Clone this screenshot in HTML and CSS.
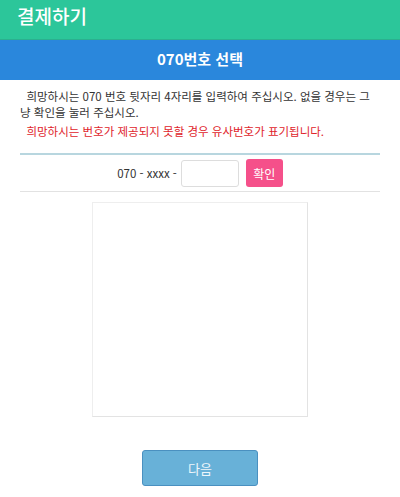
FILE: index.html
```html
<!DOCTYPE html>
<html lang="ko">
<head>
    <meta charset="UTF-8">
    <meta name="viewport" content="width=device-width, initial-scale=1.0">
    <title>결제하기</title>
    <link rel="stylesheet" href="styles.css">
</head>
<body>
    <div class="topbar">결제하기</div>
    <div class="subbar">070번호 선택</div>

    <div class="content">
        <p class="guide">&nbsp;&nbsp;희망하시는 070 번호 뒷자리 4자리를 입력하여 주십시오. 없을 경우는 그냥 확인을 눌러 주십시오.</p>
        <p class="notice">&nbsp;&nbsp;희망하시는 번호가 제공되지 못할 경우 유사번호가 표기됩니다.</p>

        <div class="number-row">
            <span class="prefix">070 - xxxx -</span>
            <input type="text" class="num-input" maxlength="4">
            <button class="btn-check">확인</button>
        </div>

        <div class="result-box"></div>

        <div class="actions">
            <button class="btn-next">다음</button>
        </div>
    </div>
</body>
</html>
```

FILE: styles.css
```css
body {
    margin: 0;
    font-family: "Noto Sans CJK KR", "Noto Sans", Roboto, sans-serif;
    background-color: #fff;
    color: #333;
}
.topbar {
    height: 40px;
    line-height: 32px;
    padding-left: 17px;
    background-color: #2cc69a;
    color: #fff;
    font-size: 19px;
    font-weight: 500;
    border-bottom: 1px solid #2bb08f;
    box-sizing: border-box;
}
.subbar {
    height: 40px;
    line-height: 38px;
    text-align: center;
    background-color: #2a87dc;
    color: #fff;
    font-size: 15px;
    font-weight: bold;
}
.content {
    padding: 8px 20px 0;
}
.guide, .notice {
    margin: 0;
    font-size: 11.5px;
    line-height: 16px;
    word-break: break-all;
}
.guide {
    color: #333;
}
.notice {
    margin-top: 3px;
    color: #e0242b;
}
.number-row {
    margin-top: 14px;
    border-top: 2px solid #b8d6df;
    border-bottom: 1px solid #e2e2e2;
    height: 36px;
    display: flex;
    align-items: center;
    justify-content: center;
    gap: 4px;
}
.prefix {
    font-size: 11.5px;
    color: #333;
}
.num-input {
    width: 58px;
    height: 27px;
    box-sizing: border-box;
    border: 1px solid #ddd;
    border-radius: 3px;
    padding: 0 4px;
    font-size: 12px;
}
.btn-check {
    margin-left: 3px;
    width: 37px;
    height: 28px;
    border: none;
    border-radius: 3px;
    background-color: #f5508a;
    color: #fff;
    font-family: inherit;
    font-size: 12px;
    padding: 0;
}
.result-box {
    width: 216px;
    height: 215px;
    box-sizing: border-box;
    margin: 10px auto 0;
    border: 1px solid #e3e3e3;
    border-left-color: #eee;
    border-top-color: #eee;
}
.actions {
    text-align: center;
    margin-top: 33px;
}
.btn-next {
    width: 116px;
    height: 36px;
    border: 1px solid #4a90c0;
    border-radius: 3px;
    background-color: #68b1d8;
    color: #eef6fb;
    font-family: inherit;
    font-size: 13px;
}
```
